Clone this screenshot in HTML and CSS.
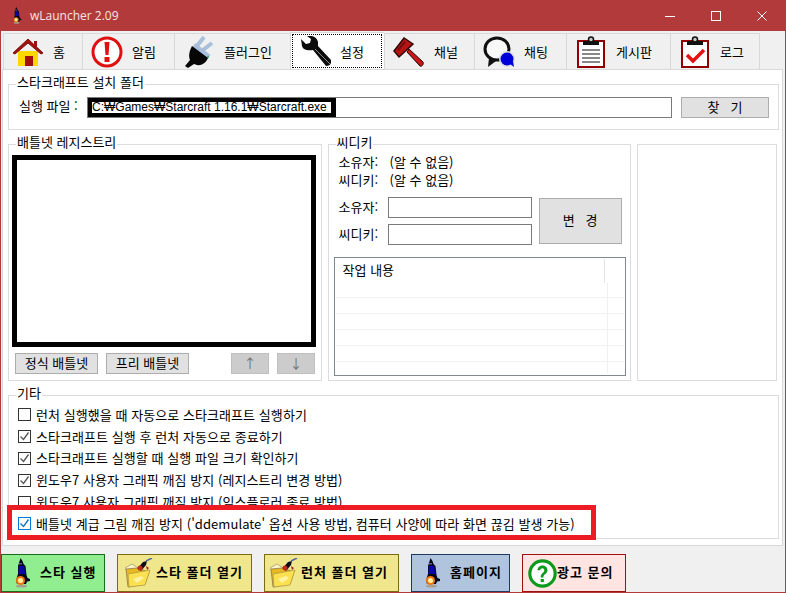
FILE: index.html
```html
<!DOCTYPE html>
<html lang="ko">
<head>
    <meta charset="UTF-8">
    <title>wLauncher 2.09</title>
    <link rel="stylesheet" href="styles.css">
</head>
<body>
    <svg class="defs" width="0" height="0">
        <symbol id="rocket" viewBox="0 0 14 30">
            <ellipse cx="5.500" cy="28" rx="5.500" ry="1.500" fill="#a8a090"/>
            <path d="M4.500 0l2 3 1 3 2 2 1 9 1 3 2.500 1v2l-3 .5-1 2.500H1l-1-3 1-4 1-3V8l1-3z" fill="#06061a"/>
            <path d="M3 8h5l1.500 8H2.500z" fill="#0808a8"/>
            <path d="M3 5h3v1.500H3z" fill="#5a5a90"/>
            <circle cx="4.500" cy="22.500" r="4.500" fill="#f07810"/>
            <circle cx="4.500" cy="22.500" r="2.500" fill="#fff0a0"/>
        </symbol>
        <symbol id="folder" viewBox="0 0 28 30">
            <path d="M0 10l7-4 6 4-9 6z" fill="#fff6c8" stroke="#a89a70" stroke-width=".8"/>
            <path d="M1 11l2 18 17-3 4-12-12-4z" fill="#e8b820" stroke="#8a7a50" stroke-width=".8"/>
            <path d="M3 16l22-4-5 15-16 2z" fill="#fbe050" stroke="#b09a40" stroke-width=".8"/>
            <path d="M8 21l8-3 3 2-7 5z" fill="#fff2a0"/>
            <path d="M13 10l5-6 4-1-1 4-5 6z" fill="#0a0a20"/>
            <path d="M21 3l6-3" stroke="#5068a8" stroke-width="1.500"/>
            <circle cx="15" cy="10" r="2.500" fill="#c02818"/>
            <path d="M21 8l3 2-2 2z" fill="#a02020"/>
        </symbol>
        <symbol id="tick" viewBox="0 0 11 11">
            <path d="M1.500 5.500l3 3 5-7" fill="none" stroke="currentColor" stroke-width="1.300"/>
        </symbol>
    </svg>

    <div class="titlebar">
        <svg class="title-icon"><use href="#rocket"/></svg>
        <span class="title-text">wLauncher 2.09</span>
        <div class="win-buttons">
            <svg class="win-btn" viewBox="0 0 12 12"><path d="M1 6.500h10" stroke="#fff"/></svg>
            <svg class="win-btn" viewBox="0 0 12 12"><rect x="1.500" y="1.500" width="9" height="9" fill="none" stroke="#fff"/></svg>
            <svg class="win-btn" viewBox="0 0 12 12"><path d="M1.500 1.500l9 9M10.500 1.500l-9 9" stroke="#fff"/></svg>
        </div>
    </div>

    <div class="tabs">
        <div class="tab">
            <svg class="tab-icon" viewBox="0 0 32 32">
                <path d="M6 15h20v15H6z" fill="#ffd800"/>
                <path d="M13 20h8v10h-8z" fill="#a01010"/>
                <path d="M1 17L16 3l15 14-2 1L16 7 3 18z" fill="#a01010" stroke="#801010"/>
                <path d="M22 5h3v6h-3z" fill="#a01010"/>
            </svg>
            <span>홈</span>
        </div>
        <div class="tab">
            <svg class="tab-icon" viewBox="0 0 32 32">
                <circle cx="16" cy="16" r="14" fill="#fff" stroke="#e01010" stroke-width="3"/>
                <path d="M13.500 6h5l-1 13h-3z" fill="#e01010"/>
                <rect x="13.500" y="21" width="5" height="5" fill="#e01010"/>
            </svg>
            <span>알림</span>
        </div>
        <div class="tab">
            <svg class="tab-icon" viewBox="0 0 32 32">
                <path d="M14 10l7-9M20 14l9-7" stroke="#a8c0dc" stroke-width="4"/>
                <path d="M11 9l15 12" stroke="#a8c0dc" stroke-width="5"/>
                <path d="M9 10l16 12c-2 5-7 8-11 7l-3-1-6 4-3-2 5-6c-2-5 0-10 2-14z" fill="#060606"/>
                <circle cx="25" cy="21" r="1" fill="#20a070"/>
            </svg>
            <span>플러그인</span>
        </div>
        <div class="tab tab-on">
            <svg class="tab-icon" viewBox="0 0 32 32">
                <path d="M2 3l5 5 4-1 1-4-4-3c5-1 10 1 11 6l0 4 13 14c1 3-1 6-5 6L14 14c-5 1-10 0-11-4z" fill="#0c0c0c"/>
                <path d="M16 13l15 15" stroke="#8a8a8a"/>
            </svg>
            <span>설정</span>
        </div>
        <div class="tab">
            <svg class="tab-icon" viewBox="0 0 32 32">
                <path d="M14 16l2-3 14 13c1 2-1 5-3 4z" fill="#c81818" stroke="#200404"/>
                <path d="M1 15L11 2l9 6L6 21z" fill="#b81414" stroke="#300808" stroke-width="1.500"/>
                <path d="M5 14l7-8" stroke="#701010" stroke-width="2"/>
            </svg>
            <span>채널</span>
        </div>
        <div class="tab">
            <svg class="tab-icon" viewBox="0 0 32 32">
                <ellipse cx="14" cy="13" rx="12" ry="11" fill="#f8f8f8" stroke="#101010" stroke-width="3"/>
                <path d="M6 22l-1 9 8-6z" fill="#101010"/>
                <circle cx="24" cy="23" r="8" fill="#e0e0e0"/>
                <circle cx="24" cy="23" r="6.500" fill="#0000d8"/>
                <path d="M27 28l4 3-1-6z" fill="#0000d8"/>
            </svg>
            <span>채팅</span>
        </div>
        <div class="tab">
            <svg class="tab-icon" viewBox="0 0 32 32">
                <rect x="3" y="5" width="26" height="26" fill="#fff" stroke="#900000" stroke-width="2"/>
                <path d="M8 5h16v4H8z" fill="#111"/>
                <circle cx="16" cy="3.500" r="2.500" fill="#ccc" stroke="#111" stroke-width="1.500"/>
                <path d="M7 14h18M7 18h18M7 22h18M7 26h18" stroke="#111"/>
            </svg>
            <span>게시판</span>
        </div>
        <div class="tab">
            <svg class="tab-icon" viewBox="0 0 32 32">
                <rect x="3" y="5" width="26" height="26" fill="#fff" stroke="#900000" stroke-width="2"/>
                <path d="M8 5h16v4H8z" fill="#111"/>
                <circle cx="16" cy="3.500" r="2.500" fill="#ccc" stroke="#111" stroke-width="1.500"/>
                <path d="M8 19l6 6 11-11" fill="none" stroke="#e81010" stroke-width="3.500"/>
            </svg>
            <span>로그</span>
        </div>
    </div>

    <div class="panel">
        <fieldset class="group group-path">
            <legend>스타크래프트 설치 폴더</legend>
            <div class="path-row">
                <span class="path-label">실행 파일 :</span>
                <div class="input input-path">
                    <span class="selected"><span class="selected-text">C:₩Games₩Starcraft 1.16.1₩Starcraft.exe</span></span>
                </div>
                <div class="btn btn-find">찾&nbsp;&nbsp;&nbsp;기</div>
            </div>
        </fieldset>

        <div class="middle">
            <fieldset class="group group-bnet">
                <legend>배틀넷 레지스트리</legend>
                <div class="bnet-list"></div>
                <div class="bnet-buttons">
                    <div class="btn btn-bnet">정식 배틀넷</div>
                    <div class="btn btn-bnet">프리 배틀넷</div>
                    <div class="btn btn-arrow btn-arrow-up">↑</div>
                    <div class="btn btn-arrow">↓</div>
                </div>
            </fieldset>

            <fieldset class="group group-cdkey">
                <legend>씨디키</legend>
                <div class="info">
                    <div class="info-row"><span class="info-key">소유자:</span><span>(알 수 없음)</span></div>
                    <div class="info-row"><span class="info-key">씨디키:</span><span>(알 수 없음)</span></div>
                </div>
                <div class="change-form">
                    <div class="form-fields">
                        <div class="form-row"><span class="form-key">소유자:</span><div class="input input-key"></div></div>
                        <div class="form-row"><span class="form-key">씨디키:</span><div class="input input-key"></div></div>
                    </div>
                    <div class="btn btn-change">변&nbsp;&nbsp;&nbsp;경</div>
                </div>
                <div class="work-list">
                    <div class="work-head"><span class="work-title">작업 내용</span></div>
                    <div class="work-row"><div class="work-cell"></div></div>
                    <div class="work-row"><div class="work-cell"></div></div>
                    <div class="work-row"><div class="work-cell"></div></div>
                    <div class="work-row"><div class="work-cell"></div></div>
                    <div class="work-row"><div class="work-cell"></div></div>
                    <div class="work-row work-row-last"><div class="work-cell"></div></div>
                </div>
            </fieldset>

            <div class="side-box"></div>
        </div>

        <fieldset class="group group-etc">
            <legend>기타</legend>
            <div class="opt"><span class="check"></span>런처 실행했을 때 자동으로 스타크래프트 실행하기</div>
            <div class="opt"><span class="check"><svg class="tick"><use href="#tick"/></svg></span>스타크래프트 실행 후 런처 자동으로 종료하기</div>
            <div class="opt"><span class="check"><svg class="tick"><use href="#tick"/></svg></span>스타크래프트 실행할 때 실행 파일 크기 확인하기</div>
            <div class="opt"><span class="check"><svg class="tick"><use href="#tick"/></svg></span>윈도우7 사용자 그래픽 깨짐 방지 (레지스트리 변경 방법)</div>
            <div class="opt"><span class="check"></span>윈도우7 사용자 그래픽 깨짐 방지 (익스플로러 종료 방법)</div>
            <div class="opt"><span class="check check-focus"><svg class="tick"><use href="#tick"/></svg></span>배틀넷 계급 그림 깨짐 방지 ('ddemulate' 옵션 사용 방법, 컴퓨터 사양에 따라 화면 끊김 발생 가능)</div>
        </fieldset>
        <div class="red-mark"></div>
    </div>

    <div class="bottom">
        <div class="big-btn big-run"><svg class="rocket-icon"><use href="#rocket"/></svg><span>스타 실행</span></div>
        <div class="big-btn big-folder"><svg class="folder-icon"><use href="#folder"/></svg><span>스타 폴더 열기</span></div>
        <div class="big-btn big-folder"><svg class="folder-icon"><use href="#folder"/></svg><span>런처 폴더 열기</span></div>
        <div class="big-btn big-home"><svg class="rocket-icon"><use href="#rocket"/></svg><span>홈페이지</span></div>
        <div class="big-btn big-ad">
            <svg class="help-icon" viewBox="0 0 32 32">
                <circle cx="16" cy="16" r="14" fill="#fff" stroke="#0c9a1c" stroke-width="3.500"/>
                <path d="M10.500 12.500c0-7 11-7 11 0 0 4-4.500 4-4.500 8h-3c0-5 4-5 4-8 0-3-4.500-3-4.500 0z" fill="#0c9a1c"/>
                <rect x="14" y="22" width="3.500" height="3.500" fill="#0c9a1c"/>
            </svg>
            <span>광고 문의</span>
        </div>
    </div>
</body>
</html>
```

FILE: styles.css
```css
* {
    box-sizing: border-box;
}

html, body {
    margin: 0;
    height: 100%;
}

body {
    width: 786px;
    height: 593px;
    overflow: hidden;
    background-color: #f0f0f0;
    border: 1px solid #b33a3a;
    border-top: 0;
    font-family: "Noto Sans CJK KR", "Liberation Sans", sans-serif;
    font-size: 13px;
    line-height: 16px;
    color: #000;
}

.defs {
    display: block;
    height: 0;
}

/* title bar */
.titlebar {
    display: flex;
    align-items: center;
    height: 31px;
    margin: 0 -1px;
    background-color: #b33a3a;
    color: #f4e4e4;
}

.title-icon {
    width: 9px;
    height: 17px;
    margin-left: 13px;
}

.title-text {
    margin-left: 8px;
    font-family: "Open Sans", sans-serif;
    font-size: 12px;
}

.win-buttons {
    display: flex;
    gap: 34px;
    margin-left: auto;
    margin-right: 18px;
}

.win-btn {
    width: 12px;
    height: 12px;
}

/* tabs */
.tabs {
    display: grid;
    grid-template-columns: 79px 92px 116px 94px 90px 92px 104px 90px;
    height: 38px;
    padding: 2px 0 0 2px;
}

.tab {
    display: flex;
    align-items: center;
    gap: 9px;
    padding-left: 8px;
    border: 1px solid #d9d9d9;
    border-right: 0;
    border-bottom: 0;
    font-size: 13px;
}

.tab:last-child {
    border-right: 1px solid #d9d9d9;
}

.tab-on {
    position: relative;
    margin-top: -1px;
    margin-bottom: -1px;
    background-color: #fff;
    outline: 1px dotted #000;
    outline-offset: -3px;
}

.tab-icon {
    flex: none;
    width: 32px;
    height: 32px;
}

/* main panel */
.panel {
    position: relative;
    width: 781px;
    height: 477px;
    margin-left: 1px;
    padding: 6px 5px 0;
    background-color: #fff;
    border: 1px solid #d9d9d9;
}

.group {
    min-width: 0;
    margin: 0;
    padding: 0;
    border: 1px solid #dcdcdc;
}

.group legend {
    margin-left: 7px;
    padding: 0 1px 4px;
    line-height: 12px;
}

.group-path {
    width: 771px;
    height: 54px;
}

.path-row {
    display: flex;
    align-items: center;
    padding: 5px 0 0 10px;
}

.path-label {
    width: 68px;
    padding-bottom: 3px;
}

.input {
    height: 21px;
    background-color: #fff;
    border: 1px solid #7a7a7a;
}

.input-path {
    width: 585px;
    overflow: hidden;
}

.selected {
    display: block;
    width: 249px;
    height: 21px;
    margin: -1px 0 0 -1px;
    background-color: #fff;
    border: 5px solid #000;
    overflow: hidden;
}

.selected-text {
    display: block;
    height: 11px;
    overflow: hidden;
    font-family: "Liberation Sans", sans-serif;
    font-size: 12px;
    line-height: 11px;
    white-space: nowrap;
}

.btn {
    display: flex;
    align-items: center;
    justify-content: center;
    padding-bottom: 2px;
    background-color: #e1e1e1;
    border: 1px solid #adadad;
}

.btn-find {
    width: 88px;
    height: 21px;
    margin-left: 9px;
}

.middle {
    display: flex;
    margin-top: 6px;
}

.group-bnet {
    width: 314px;
    height: 245px;
}

.bnet-list {
    height: 192px;
    margin: 3px 5px 0 3px;
    border: 5px solid #000;
}

.bnet-buttons {
    display: flex;
    margin: 6px 0 0 6px;
}

.btn-bnet {
    width: 83px;
    height: 21px;
    margin-right: 8px;
}

.btn-arrow {
    width: 38px;
    height: 21px;
    margin-left: 8px;
    background-color: #cccccc;
    border-color: #bfbfbf;
    color: #6d6d6d;
}

.btn-arrow-up {
    margin-left: 34px;
}

.group-cdkey {
    width: 304px;
    height: 245px;
    margin-left: 6px;
}

.info {
    padding-top: 2px;
}

.info-row {
    display: flex;
    height: 18px;
    padding-left: 10px;
}

.info-key {
    width: 51px;
}

.change-form {
    display: flex;
    margin: 7px 0 0 10px;
}

.form-row {
    display: flex;
    align-items: center;
    margin-bottom: 6px;
}

.form-key {
    width: 49px;
    padding-bottom: 2px;
}

.input-key {
    width: 144px;
}

.btn-change {
    width: 83px;
    height: 46px;
    margin: 1px 0 0 7px;
}

.work-list {
    width: 292px;
    height: 119px;
    margin: 6px 0 0 5px;
    padding: 1px;
    border: 1px solid #828790;
}

.work-head {
    height: 24px;
    margin-right: 19px;
    padding: 3px 0 0 7px;
    border-right: 1px solid #e4e4e4;
}

.work-row {
    height: 16px;
    border-bottom: 1px solid #f0f0f0;
}

.work-row:nth-child(2) {
    height: 15px;
}

.work-row-last {
    height: 11px;
    border-bottom: 0;
}

.work-cell {
    width: 272px;
    height: 100%;
    border-right: 1px solid #f0f0f0;
}

.side-box {
    width: 140px;
    height: 237px;
    margin: 8px 0 0 6px;
    border: 1px solid #dcdcdc;
}

.group-etc {
    position: relative;
    width: 771px;
    height: 152px;
    margin-top: 6px;
    padding-top: 1px;
}

.opt {
    display: flex;
    align-items: center;
    height: 21.8px;
    padding-left: 9px;
    letter-spacing: 0.06px;
    white-space: nowrap;
}

.check {
    flex: none;
    display: flex;
    width: 13px;
    height: 13px;
    margin-right: 5px;
    background-color: #fff;
    border: 1px solid #333;
    color: #555;
}

.check-focus {
    border-color: #0078d7;
    color: #0078d7;
}

.tick {
    width: 11px;
    height: 11px;
}

.red-mark {
    position: absolute;
    left: 4px;
    top: 435px;
    width: 589px;
    height: 35px;
    border: 5px solid #ed1c24;
}

/* bottom buttons */
.bottom {
    display: flex;
    gap: 12px;
    padding-top: 8px;
}

.big-btn {
    display: flex;
    align-items: center;
    height: 38px;
    padding-bottom: 2px;
    border: 1px solid;
    font-weight: bold;
    letter-spacing: 1px;
    white-space: nowrap;
}

.big-btn:nth-child(1) {
    width: 104px;
}

.big-btn:nth-child(2), .big-btn:nth-child(3) {
    width: 135px;
}

.big-btn:nth-child(4) {
    width: 99px;
}

.big-btn:nth-child(5) {
    width: 104px;
}

.big-run {
    background-color: #90ee90;
    border-color: #1a6e1a;
}

.big-folder {
    background-color: #f0e68c;
    border-color: #7a6a10;
}

.big-home {
    background-color: #b0c4de;
    border-color: #1f3a60;
}

.big-ad {
    background-color: #ffe4e1;
    border-color: #a01010;
}

.rocket-icon {
    flex: none;
    width: 14px;
    height: 30px;
    margin: 2px 10px 0 14px;
}

.folder-icon {
    flex: none;
    width: 28px;
    height: 30px;
    margin: 2px 3px 0 7px;
}

.big-folder + .big-folder .folder-icon {
    margin-left: 5px;
}

.help-icon {
    flex: none;
    width: 29px;
    height: 29px;
    margin: 2px 0 0 5px;
}
```
